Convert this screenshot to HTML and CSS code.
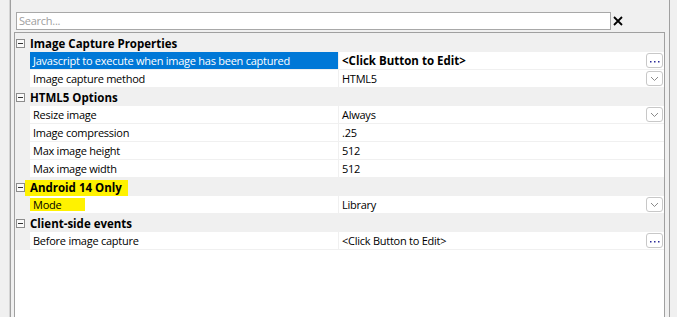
FILE: index.html
```html
<!DOCTYPE html>
<html>
<head>
<meta charset="utf-8">
<link rel="stylesheet" href="styles.css">
</head>
<body>
<div class="frame">
  <div class="search-row">
    <div class="search">Search...</div>
    <svg class="clear" width="10" height="10" viewBox="0 0 10 10"><path d="M1 1 L9 9 M9 1 L1 9" stroke="#000" stroke-width="1.8" fill="none"/></svg>
  </div>
  <div class="grid">
    <div class="rows">
      <div class="cat"><span class="toggle"></span><span class="cat-label">Image Capture Properties</span></div>
      <div class="prop selected">
        <div class="gutter"></div>
        <div class="name">Javascript to execute when image has been captured</div>
        <div class="value bold"><span class="val">&lt;Click Button to Edit&gt;</span>
          <span class="btn"><svg width="15" height="13" viewBox="0 0 15 13"><rect x="3" y="7" width="1.5" height="1.5" fill="#2b2b9a"/><rect x="7" y="7" width="1.5" height="1.5" fill="#2b2b9a"/><rect x="11" y="7" width="1.5" height="1.5" fill="#2b2b9a"/></svg></span>
        </div>
      </div>
      <div class="prop">
        <div class="gutter"></div>
        <div class="name">Image capture method</div>
        <div class="value"><span class="val">HTML5</span>
          <span class="btn"><svg width="15" height="13" viewBox="0 0 15 13"><path d="M4 5 L7.5 8.5 L11 5" stroke="#8a8a8a" stroke-width="1" fill="none"/></svg></span>
        </div>
      </div>
      <div class="cat"><span class="toggle"></span><span class="cat-label">HTML5 Options</span></div>
      <div class="prop">
        <div class="gutter"></div>
        <div class="name">Resize image</div>
        <div class="value"><span class="val">Always</span>
          <span class="btn"><svg width="15" height="13" viewBox="0 0 15 13"><path d="M4 5 L7.5 8.5 L11 5" stroke="#8a8a8a" stroke-width="1" fill="none"/></svg></span>
        </div>
      </div>
      <div class="prop">
        <div class="gutter"></div>
        <div class="name">Image compression</div>
        <div class="value"><span class="val">.25</span></div>
      </div>
      <div class="prop">
        <div class="gutter"></div>
        <div class="name">Max image height</div>
        <div class="value"><span class="val">512</span></div>
      </div>
      <div class="prop">
        <div class="gutter"></div>
        <div class="name">Max image width</div>
        <div class="value"><span class="val">512</span></div>
      </div>
      <div class="cat"><span class="toggle"></span><span class="cat-label hl-cat">Android 14 Only</span></div>
      <div class="prop">
        <div class="gutter"></div>
        <div class="name"><span class="hl-mode">Mode</span></div>
        <div class="value"><span class="val">Library</span>
          <span class="btn"><svg width="15" height="13" viewBox="0 0 15 13"><path d="M4 5 L7.5 8.5 L11 5" stroke="#8a8a8a" stroke-width="1" fill="none"/></svg></span>
        </div>
      </div>
      <div class="cat"><span class="toggle"></span><span class="cat-label">Client-side events</span></div>
      <div class="prop">
        <div class="gutter"></div>
        <div class="name">Before image capture</div>
        <div class="value"><span class="val">&lt;Click Button to Edit&gt;</span>
          <span class="btn"><svg width="15" height="13" viewBox="0 0 15 13"><rect x="3" y="7" width="1.5" height="1.5" fill="#2b2b9a"/><rect x="7" y="7" width="1.5" height="1.5" fill="#2b2b9a"/><rect x="11" y="7" width="1.5" height="1.5" fill="#2b2b9a"/></svg></span>
        </div>
      </div>
    </div>
  </div>
</div>
</body>
</html>
```
FILE: styles.css
```css
html, body {
  margin: 0;
  height: 100%;
  overflow: hidden;
}
body {
  background: #f0f0f0;
  font-family: "Open Sans", "Noto Sans", sans-serif;
  font-size: 11px;
  letter-spacing: -0.25px;
  color: #000;
}
.frame {
  margin-left: 9px;
  width: 661px;
  height: 317px;
  box-sizing: border-box;
  border-left: 1px solid #d4d4d4;
  border-right: 1px solid #a0a0a0;
  padding-top: 12px;
}
.frame-inner {
  display: block;
}
.search-row {
  display: flex;
  align-items: center;
  margin-left: 6px;
  height: 18px;
}
.search {
  width: 595px;
  height: 18px;
  box-sizing: border-box;
  border: 1px solid #a8a8a8;
  background: #fff;
  color: #a0a0a0;
  padding-left: 2px;
  line-height: 16px;
}
.clear {
  margin-left: 2px;
  display: block;
}
.grid {
  margin: 2px 0 0 4px;
  width: 651px;
  height: 400px;
  box-sizing: border-box;
  border: 1px solid #a0a0a0;
  background: #fff;
  position: relative;
}
.grid::before {
  content: "";
  position: absolute;
  left: -5px;
  top: -60px;
  width: 1px;
  height: 500px;
  background: #a0a0a0;
}
.rows {
  border-top: 1px solid #f0f0f0;
}
.cat {
  height: 18px;
  background: #f0f0f0;
  display: flex;
  align-items: center;
  font-weight: bold;
  font-size: 11.5px;
  letter-spacing: 0;
  white-space: nowrap;
}
.toggle {
  position: relative;
  width: 9px;
  height: 9px;
  box-sizing: border-box;
  border: 1px solid #8c8c8c;
  background: #fafafa;
  margin-left: 1px;
  margin-right: 5px;
  flex: none;
}
.toggle::after {
  content: "";
  position: absolute;
  left: 1px;
  top: 3px;
  width: 5px;
  height: 1px;
  background: #333;
}
.hl-cat {
  display: inline-block;
  align-self: flex-end;
  height: 16px;
  line-height: 15px;
  margin-left: -5px;
  padding: 0 6px 0 5px;
  background: #fff200;
}
.prop {
  display: flex;
  height: 18px;
}
.gutter {
  width: 15px;
  flex: none;
  background: #f0f0f0;
}
.name {
  width: 309px;
  flex: none;
  box-sizing: border-box;
  border-right: 1px solid #f0f0f0;
  border-bottom: 1px solid #f0f0f0;
  padding-left: 3px;
  line-height: 17px;
  white-space: nowrap;
  overflow: hidden;
}
.selected .name {
  background: #0078d7;
  color: #fff;
}
.hl-mode {
  display: inline-block;
  vertical-align: top;
  margin-top: 2px;
  margin-left: -3px;
  padding-left: 3px;
  width: 52px;
  height: 13px;
  line-height: 13px;
  background: #fff200;
}
.value {
  flex: 1;
  display: flex;
  align-items: center;
  box-sizing: border-box;
  border-bottom: 1px solid #f0f0f0;
  padding-left: 3px;
  white-space: nowrap;
}
.bold {
  font-weight: bold;
  font-size: 11.5px;
  letter-spacing: 0;
}
.btn {
  margin-left: auto;
  margin-right: 1px;
  width: 17px;
  height: 15px;
  box-sizing: border-box;
  border: 1px solid #c8c8c8;
  border-radius: 3px;
  background: #fff;
  display: flex;
}
.btn svg {
  display: block;
}
```
